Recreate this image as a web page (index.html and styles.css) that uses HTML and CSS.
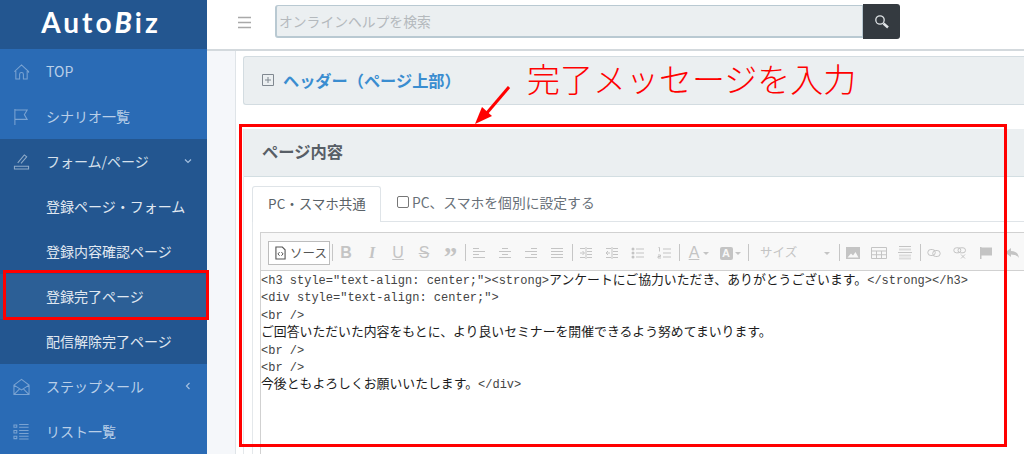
FILE: index.html
```html
<!DOCTYPE html>
<html lang="ja">
<head>
<meta charset="utf-8">
<title>AutoBiz</title>
<link rel="stylesheet" href="styles.css">
</head>
<body>
<div class="app">
  <aside class="sidebar">
    <div class="logo"><span>Auto</span><i class="logo-b">B</i><span>iz</span></div>
    <nav class="menu">
      <a class="item">
        <svg class="ico" viewBox="0 0 18 18"><path d="M1.5 8.5 9 1.5l7.5 7v1.2M3 8v8.5h4v-5q0-2 2-2t2 2v5h4V8"/></svg>TOP</a>
      <a class="item">
        <svg class="ico" viewBox="0 0 18 18"><path d="M2 .5v17M2 1.500h13l-3 5 3 5H2"/></svg>シナリオ一覧</a>
      <div class="group">
        <a class="item open">
          <svg class="ico" viewBox="0 0 18 18"><path d="M5 10 12 1.500l2.500 2-6 7M1.500 13.500h15v3h-15z"/></svg>フォーム/ページ
          <svg class="chev" viewBox="0 0 8 8"><path d="m1 2.500 3 3 3-3"/></svg></a>
        <a class="sub">登録ページ・フォーム</a>
        <a class="sub">登録内容確認ページ</a>
        <a class="sub active">登録完了ページ</a>
        <a class="sub">配信解除完了ページ</a>
      </div>
      <a class="item">
        <svg class="ico" viewBox="0 0 18 18"><path d="M1 7 9 1l8 6v10H1zM1 7l8 5 8-5M1 17l6-6M17 17l-6-6"/></svg>ステップメール
        <svg class="chev" viewBox="0 0 8 8"><path d="M5.500 1 2.500 4l3 3"/></svg></a>
      <a class="item">
        <svg class="ico" viewBox="0 0 18 18"><path d="M1 1.500h3v2.500H1zM1 7.500h3V10H1zM1 13.500h3V16H1zM6.500 1h10M6.500 4h10M6.500 7.500h10M6.500 10.500h10M6.500 13.500h10M6.500 16.500h10"/></svg>リスト一覧</a>
    </nav>
  </aside>

  <div class="main">
    <header class="topbar">
      <svg class="burger" viewBox="0 0 13 13"><path d="M0 1.500h13M0 6.500h13M0 11.500h13"/></svg>
      <div class="search">
        <input class="search-input" type="text" placeholder="オンラインヘルプを検索">
        <button class="search-btn" type="button" aria-label="検索">
          <svg viewBox="0 0 16 16"><circle cx="6" cy="6" r="4.200"/><path class="thick" d="m9.500 9.500 4.500 4"/></svg>
        </button>
      </div>
    </header>

    <div class="content">
      <section class="panel collapsed">
        <svg class="plus" viewBox="0 0 12 12"><path d="M.500.500h11v11H.500zM3 6h6M6 3v6"/></svg>
        <h2 class="panel-link">ヘッダー（ページ上部）</h2>
      </section>

      <section class="panel-body">
        <h2 class="panel-title">ページ内容</h2>
        <div class="tabs">
          <div class="tab">PC・スマホ共通</div>
          <label class="tab-check"><input type="checkbox">PC、スマホを個別に設定する</label>
        </div>
        <div class="pane">
          <div class="editor">
            <div class="toolbar">
              <button class="source" type="button">
                <svg viewBox="0 0 12 14"><path class="file" d="M1 .5h7l3 3v10H1z"/><path class="code" d="M5 6 3.200 8 5 10M7 6l1.800 2L7 10"/></svg>ソース</button>
              <span class="sep"></span>
              <span class="tb tb-b">B</span>
              <span class="tb tb-i">I</span>
              <span class="tb tb-u">U</span>
              <span class="tb tb-s">S</span>
              <span class="tb tb-q">”</span>
              <span class="sep"></span>
              <span class="tb"><svg viewBox="0 0 14 12"><path d="M1 1.500h6M1 4.500h12M1 7.500h6M1 10.500h12"/></svg></span>
              <span class="tb"><svg viewBox="0 0 14 12"><path d="M4 1.500h6M1 4.500h12M4 7.500h6M1 10.500h12"/></svg></span>
              <span class="tb"><svg viewBox="0 0 14 12"><path d="M7 1.500h6M1 4.500h12M7 7.500h6M1 10.500h12"/></svg></span>
              <span class="tb"><svg viewBox="0 0 14 12"><path d="M1 1.500h12M1 4.500h12M1 7.500h12M1 10.500h12"/></svg></span>
              <span class="sep"></span>
              <span class="tb"><svg viewBox="0 0 14 12"><path d="M1 1.500h5M8 1.500h5M8 4.500h5M8 7.500h5M1 10.500h5M8 10.500h5M7 0v12M1 6h4M3.500 4 5.500 6l-2 2"/></svg></span>
              <span class="tb"><svg viewBox="0 0 14 12"><path d="M1 1.500h5M8 1.500h5M8 4.500h5M8 7.500h5M1 10.500h5M8 10.500h5M7 0v12M1 6h4M3 4 1 6l2 2"/></svg></span>
              <span class="tb"><svg viewBox="0 0 14 12"><path d="M5 2h8M5 6h8M5 10h8"/><circle class="dot" cx="2" cy="2" r="1.500"/><circle class="dot" cx="2" cy="6" r="1.500"/><circle class="dot" cx="2" cy="10" r="1.500"/></svg></span>
              <span class="tb"><svg viewBox="0 0 14 12"><path d="M6 2h8M6 6h8M6 10h8M1.500 .5h1v4M1 8h2.500v1.500H1v1.500h3"/></svg></span>
              <span class="sep"></span>
              <span class="tb tb-color">A</span><span class="caret"></span>
              <span class="tb tb-bg"><b>A</b></span><span class="caret"></span>
              <span class="sep sep-wide"></span>
              <span class="combo">サイズ<span class="caret"></span></span>
              <span class="sep"></span>
              <span class="tb"><svg viewBox="0 0 14 12"><path class="fill" d="M0 0h14v12H0z"/><path class="cut" d="m1.500 10.500 3.500-4 2 2 2.500-3.500 3 5.500z"/></svg></span>
              <span class="tb tb-wide"><svg viewBox="0 0 16 12"><path d="M.5.500h15v11H.5zM.5 4h15M.5 7.750h15M5.500 4v7.500M10.500 4v7.500"/></svg></span>
              <span class="tb"><svg viewBox="0 0 14 14"><path d="M1 .5h12M0 6.500h14" /><path class="pale" d="M1 3.500h12M1 9.500h12M1 12.500h12"/></svg></span>
              <span class="sep"></span>
              <span class="tb"><svg viewBox="0 0 14 10"><rect x=".8" y="1.500" width="7.500" height="6" rx="3"/><rect x="5.700" y="2.500" width="7.500" height="6" rx="3"/></svg></span>
              <span class="tb"><svg viewBox="0 0 14 12"><rect x=".8" y=".8" width="7" height="5" rx="2.500"/><rect x="5" y=".8" width="7.500" height="5" rx="2.500"/><path d="m8 7.500 4 4M12 7.500l-4 4"/></svg></span>
              <span class="tb"><svg viewBox="0 0 14 14"><path class="fill" d="M1 1h1.500v12H1zM2.500 1.500h10.500v8H2.500z"/></svg></span>
              <span class="tb"><svg viewBox="0 0 14 12"><path class="fill" d="M0 5.500 6 1v3q7 0 8 7-2-3.500-8-3.500V10z"/></svg></span>
            </div>
            <div class="code-area">
              <div class="ln">&lt;h3 style="text-align: center;"&gt;&lt;strong&gt;<span class="ja">アンケートにご協力いただき、ありがとうございます。</span>&lt;/strong&gt;&lt;/h3&gt;</div>
              <div class="ln">&lt;div style="text-align: center;"&gt;</div>
              <div class="ln">&lt;br /&gt;</div>
              <div class="ln"><span class="ja">ご回答いただいた内容をもとに、より良いセミナーを開催できるよう努めてまいります。</span></div>
              <div class="ln">&lt;br /&gt;</div>
              <div class="ln">&lt;br /&gt;</div>
              <div class="ln"><span class="ja">今後ともよろしくお願いいたします。</span>&lt;/div&gt;</div>
            </div>
          </div>
        </div>
      </section>
    </div>
  </div>
</div>

<div class="mark mark-nav"></div>
<div class="mark mark-body"></div>
<div class="note">完了メッセージを入力</div>
<svg class="arrow" viewBox="0 0 40 44"><path d="M35 4 12 31" /><path class="head" d="M1 41 8 24 18 33z"/></svg>
</body>
</html>
```
FILE: styles.css
```css
* { box-sizing: border-box; }
html, body { margin: 0; height: 100%; overflow: hidden; }
body {
  position: relative;
  background: #fff;
  font-family: "Noto Sans CJK JP", "Noto Sans", sans-serif;
  font-size: 14px;
  color: #495057;
}
.app { display: flex; height: 454px; overflow: hidden; }

/* sidebar */
.sidebar { width: 207px; flex: none; background: #2a6bb5; overflow: hidden; }
.logo {
  height: 49px;
  background: #235690;
  color: #fff;
  display: flex;
  align-items: center;
  justify-content: center;
  padding: 0 5px 5px 0;
  font: 700 28px/1 "Lato", sans-serif;
  letter-spacing: 3px;
}
.logo-b { font-style: italic; font-weight: 900; }
.menu { display: flex; flex-direction: column; }
.item {
  height: 45px;
  padding: 0 0 1px 46px;
  display: flex;
  align-items: center;
  position: relative;
  color: #b9cfe8;
  line-height: 1;
}
.ico {
  position: absolute;
  left: 13px;
  top: 14px;
  width: 17px;
  height: 18px;
  fill: none;
  stroke: #7aa3d2;
  stroke-width: 1.100;
}
.chev {
  position: absolute;
  left: 184px;
  top: 18px;
  width: 8px;
  height: 8px;
  fill: none;
  stroke: #a3bfdf;
  stroke-width: 1.200;
}
.group { background: #235690; }
.group .item { color: #d5e0ec; }
.group .ico { stroke: #8fabc9; }
.sub {
  height: 45px;
  padding: 0 0 2px 46px;
  display: flex;
  align-items: center;
  color: #e0e8f1;
  line-height: 1;
}
.active { background: #2c5f96; }

/* top bar */
.main { flex: 1; min-width: 0; display: flex; flex-direction: column; }
.topbar {
  height: 51px;
  flex: none;
  padding: 4px 0 0 31px;
  display: flex;
  align-items: flex-start;
  border-bottom: 2px solid #d3d9dd;
}
.burger {
  width: 13px;
  height: 13px;
  margin: 12px 24px 0 0;
  stroke: #a9a9a9;
  stroke-width: 1.500;
  flex: none;
}
.search { display: flex; align-items: center; width: 625px; height: 35px; }
.search-input {
  flex: 1;
  min-width: 0;
  height: 33px;
  padding: 0 0 1px 2px;
  background: #ebeff1;
  border: 1px solid #b9c9d2;
  border-width: 1px 1px 2px 2px;
  border-radius: 3px 0 0 3px;
  font: 13.800px "Noto Sans CJK JP", sans-serif;
  outline: 0;
}
.search-input::placeholder { color: #b4b9bd; opacity: 1; }
.search-btn {
  width: 37px;
  height: 35px;
  padding: 0;
  border: 0;
  border-radius: 0 3px 3px 0;
  background: #343a40;
  display: flex;
  align-items: center;
  justify-content: center;
}
.search-btn svg { width: 16px; height: 16px; fill: none; stroke: #dfe3e6; stroke-width: 1.300; }
.search-btn .thick { stroke-width: 2.400; }

/* content */
.content {
  flex: 1;
  min-height: 0;
  margin-left: 28px;
  padding: 5px 0 0 7px;
  background: #fff;
  border-left: 1px solid #dfe4e8;
  box-shadow: -28px 0 0 #f5f7fa;
  overflow: hidden;
}
.panel {
  height: 49px;
  display: flex;
  align-items: center;
  padding: 0 0 1px 18px;
  background: #ebeff1;
  border: 1px solid #d3dce1;
  border-right: 0;
  border-radius: 3px 0 0 3px;
}
.plus { width: 12px; height: 12px; margin-right: 9px; fill: none; stroke: #808890; stroke-width: 1; }
.panel-link { margin: 0; font-size: 16.200px; font-weight: 700; color: #3a8dd0; line-height: 1; }
.panel-body {
  margin-top: 24px;
  border-left: 1px solid #e4e8eb;
  height: 326px;
}
.panel-title {
  margin: 0;
  height: 48px;
  padding: 0 0 3px 18px;
  display: flex;
  align-items: center;
  background: #ebeff1;
  border-bottom: 1px solid #d3dee2;
  font-size: 16.300px;
  font-weight: 700;
  color: #575e66;
}
.tabs {
  margin: 9px 0 0 8px;
  height: 36px;
  display: flex;
  border-bottom: 1px solid #dfe4e8;
}
.tab {
  width: 129px;
  height: 36px;
  padding-left: 1px;
  text-align: center;
  line-height: 32px;
  font-size: 13.500px;
  color: #5a6268;
  background: #fff;
  border: 1px solid #dfe4e8;
  border-bottom: 0;
  border-radius: 3px 3px 0 0;
}
.tab-check {
  padding: 0 0 3px 16px;
  display: flex;
  align-items: center;
  font-size: 13.800px;
  color: #687078;
}
.tab-check input {
  appearance: none;
  width: 12px;
  height: 12px;
  margin: 0 3px 0 0;
  border: 1px solid #777;
  border-radius: 2px;
  background: #fff;
}
.pane {
  margin-left: 8px;
  padding: 10px 0 0 7px;
  border-left: 1px solid #e4e8eb;
}

/* editor */
.editor { border-left: 1px solid #d1d1d1; height: 222px; }
.toolbar {
  height: 39px;
  padding: 8px 0 0 7px;
  display: flex;
  align-items: flex-start;
  background: #f8f8f8;
  border-top: 1px solid #d1d1d1;
  border-bottom: 1px solid #d1d1d1;
  white-space: nowrap;
}
.source {
  height: 24px;
  width: 62px;
  flex: none;
  padding: 0 0 0 6px;
  display: flex;
  align-items: center;
  gap: 4px;
  background: #fff;
  border: 1px solid #bcbcbc;
  font: 12.500px "Noto Sans CJK JP", sans-serif;
  color: #555;
  line-height: 1;
}
.source svg { width: 11px; height: 14px; flex: none; }
.source .file { fill: #fff; stroke: #555; stroke-width: 1.200; }
.source .code { fill: none; stroke: #444; stroke-width: 1; }
.sep { width: 1px; height: 17px; margin: 3px 0 0 2px; background: #c6c6c6; flex: none; }
.sep-wide { margin-left: 7px; }
.tb {
  width: 26px;
  height: 24px;
  flex: none;
  display: flex;
  align-items: center;
  justify-content: center;
  color: #c4c4c4;
  font: 700 16px "Liberation Sans", sans-serif;
}
.tb svg { width: 14px; height: 14px; fill: none; stroke: #c4c4c4; stroke-width: 1; }
.tb .dot, .tb .fill { fill: #c4c4c4; stroke: none; }
.tb .cut { fill: #f8f8f8; stroke: none; }
.tb .pale { stroke: #dcdcdc; stroke-width: 2; }
.tb-wide svg { width: 16px; }
.tb-i { font: italic 700 16px "Liberation Serif", serif; }
.tb-u { text-decoration: underline; font-weight: 400; }
.tb-s { text-decoration: line-through; font-weight: 400; }
.tb-q { font: 700 27px/1 "Liberation Serif", serif; padding-top: 8px; letter-spacing: -1px; }
.tb-color { width: 24px; margin-left: 2px; font-weight: 400; text-decoration: underline; }
.tb-bg { width: 24px; margin-left: 5px; }
.tb-bg b { display: block; width: 13px; height: 13px; border-radius: 2px; background: #c4c4c4; color: #f8f8f8; font-size: 11px; line-height: 13px; text-align: center; }
.caret {
  width: 0;
  height: 0;
  margin: 11px 0 0 -3px;
  flex: none;
  border: 3px solid transparent;
  border-top: 3px solid #c4c4c4;
  border-bottom: 0;
}
.combo {
  width: 88px;
  height: 24px;
  padding-left: 11px;
  flex: none;
  display: flex;
  justify-content: space-between;
  font-size: 12.500px;
  line-height: 22px;
  color: #c4c4c4;
}
.combo .caret { margin: 11px 7px 0 0; }

.code-area {
  padding: 2px 0 0 0;
  font: 12px/17.400px "Liberation Mono", monospace;
  color: #444;
  white-space: nowrap;
}
.ln { height: 17.400px; }
.ja { font: 12.850px/1 "Noto Sans CJK JP", sans-serif; color: #1c1c1c; }

/* red annotations over the screenshot */
.mark { position: absolute; border: 3px solid #f00; }
.mark-nav { left: 3px; top: 270px; width: 206px; height: 50px; }
.mark-body { left: 239px; top: 124px; width: 768px; height: 323px; }
.note {
  position: absolute;
  left: 527px;
  top: 55px;
  font-size: 33px;
  font-weight: 300;
  line-height: 46px;
  color: #f00;
  white-space: nowrap;
}
.arrow {
  position: absolute;
  left: 474px;
  top: 83px;
  width: 40px;
  height: 44px;
  fill: none;
  stroke: #f00;
  stroke-width: 3;
}
.arrow .head { fill: #f00; stroke: none; }
```
